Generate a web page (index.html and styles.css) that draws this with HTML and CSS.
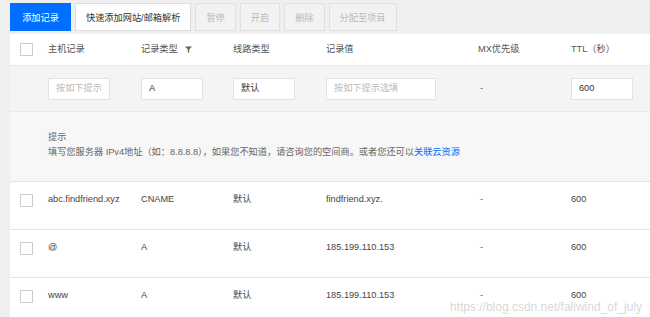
FILE: index.html
```html
<!DOCTYPE html>
<html lang="zh-CN">
  <head>
    <meta charset="UTF-8" />
    <meta name="viewport" content="width=device-width, initial-scale=1.0" />
    <title>记录管理</title>
    <link rel="stylesheet" href="styles.css">
  </head>
  <body>
    <div class="toolbar">
      <button class="btn btn-primary">添加记录</button>
      <button class="btn">快速添加网站/邮箱解析</button>
      <button class="btn btn-disabled">暂停</button>
      <button class="btn btn-disabled">开启</button>
      <button class="btn btn-disabled">删除</button>
      <button class="btn btn-disabled">分配至项目</button>
    </div>

    <div class="table">
      <div class="row row-head">
        <div class="cell"><span class="check"></span></div>
        <div class="cell">主机记录</div>
        <div class="cell">记录类型
          <svg class="filter" width="7" height="7" viewBox="0 0 7 7">
            <path d="M0 0.5h7L4.2 3.6V6.5H2.8V3.6Z" fill="#666" />
          </svg>
        </div>
        <div class="cell">线路类型</div>
        <div class="cell">记录值</div>
        <div class="cell">MX优先级</div>
        <div class="cell">TTL（秒）</div>
      </div>

      <div class="row row-edit">
        <div class="cell"></div>
        <div class="cell"><span class="input input-sm placeholder">按如下提示</span></div>
        <div class="cell"><span class="input input-sm">A</span></div>
        <div class="cell"><span class="input input-sm">默认</span></div>
        <div class="cell"><span class="input input-lg placeholder">按如下提示选填</span></div>
        <div class="cell dash">-</div>
        <div class="cell"><span class="input input-sm">600</span></div>
      </div>

      <div class="hint">
        <p class="hint-title">提示</p>
        <p>填写您服务器 IPv4地址（如：8.8.8.8），如果您不知道，请咨询您的空间商。或者您还可以<a href="#">关联云资源</a></p>
      </div>

      <div class="row row-data">
        <div class="cell"><span class="check"></span></div>
        <div class="cell">abc.findfriend.xyz</div>
        <div class="cell">CNAME</div>
        <div class="cell">默认</div>
        <div class="cell">findfriend.xyz.</div>
        <div class="cell dash">-</div>
        <div class="cell">600</div>
      </div>
      <div class="row row-data">
        <div class="cell"><span class="check"></span></div>
        <div class="cell">@</div>
        <div class="cell">A</div>
        <div class="cell">默认</div>
        <div class="cell">185.199.110.153</div>
        <div class="cell dash">-</div>
        <div class="cell">600</div>
      </div>
      <div class="row row-data">
        <div class="cell"><span class="check"></span></div>
        <div class="cell">www</div>
        <div class="cell">A</div>
        <div class="cell">默认</div>
        <div class="cell">185.199.110.153</div>
        <div class="cell dash">-</div>
        <div class="cell">600</div>
      </div>

      <div class="watermark">https://blog.csdn.net/fallwind_of_july</div>
    </div>
  </body>
</html>
```

FILE: styles.css
```css
html {
  font-family: "Liberation Sans", "Noto Sans CJK SC", sans-serif;
  font-size: 9.2px;
  line-height: 1.2;
}

body {
  margin: 0;
  padding: 0;
  background: #efefef;
  color: #333;
  overflow: hidden;
}

.toolbar {
  display: flex;
  gap: 4px;
  padding: 3px 0 3px 10px;
  height: 28px;
}

.btn {
  font-family: inherit;
  font-size: 9.2px;
  height: 28px;
  padding: 0 10px;
  white-space: nowrap;
  border: 1px solid #ddd;
  background: #fff;
  color: #333;
  cursor: pointer;
}

.btn-primary {
  background: #006eff;
  border-color: #006eff;
  color: #fff;
  width: 61px;
  padding: 0;
}

.btn-disabled {
  background: #f2f2f2;
  border-color: #e0e0e0;
  color: #bbb;
  cursor: default;
}

.table {
  position: relative;
  margin-left: 10px;
  background: #fff;
}

.row {
  display: grid;
  grid-template-columns: 38px 93px 92px 93px 152px 93px 1fr;
  align-items: center;
}

.row-head {
  height: 31px;
  color: #555;
}

.row-edit {
  height: 45px;
  background: #f4f4f4;
  border-top: 1px solid #e8e8e8;
}

.row-data {
  height: 48px;
  align-items: start;
  padding-top: 12px;
  box-sizing: border-box;
  border-top: 1px solid #e5e5e5;
  color: #444;
}

.row-data:first-of-type {
  border-top: 0;
}

.cell {
  display: flex;
  align-items: center;
  white-space: nowrap;
}

.check {
  display: block;
  width: 11px;
  height: 11px;
  margin-left: 10px;
  border: 1px solid #ccc;
  background: #fff;
}

.filter {
  margin-left: 7px;
}

.input {
  display: flex;
  align-items: center;
  box-sizing: border-box;
  height: 22px;
  padding: 0 7px;
  background: #fff;
  border: 1px solid #e2e2e2;
  color: #333;
}

.input-sm {
  width: 62px;
}

.input-lg {
  width: 110px;
}

.placeholder {
  color: #bbb;
}

.dash {
  padding-left: 2px;
  color: #666;
}

.hint {
  height: 70px;
  box-sizing: border-box;
  padding: 18px 0 0 38px;
  background: #f7f7f7;
  border-top: 1px solid #ebebeb;
  color: #666;
}

.hint p {
  margin: 0;
  line-height: 15px;
}

.hint a {
  color: #006eff;
  text-decoration: none;
}

.watermark {
  position: absolute;
  right: 8px;
  bottom: 11px;
  font-size: 12px;
  line-height: 14px;
  color: rgba(180, 180, 180, 0.55);
}
```
